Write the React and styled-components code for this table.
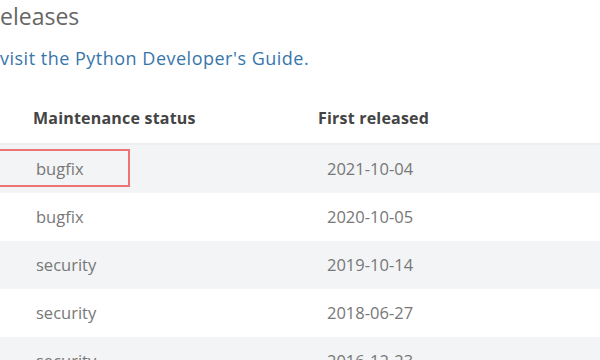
import styled, { createGlobalStyle } from "styled-components";

const releases = [
  { status: "bugfix", date: "2021-10-04", marked: true },
  { status: "bugfix", date: "2020-10-05" },
  { status: "security", date: "2019-10-14" },
  { status: "security", date: "2018-06-27" },
  { status: "security", date: "2016-12-23" },
];

const GlobalStyle = createGlobalStyle`
  html, body {
    margin: 0;
    background: #fff;
    overflow: hidden;
  }
  body {
    font-family: "Open Sans", "Liberation Sans", sans-serif;
  }
`;

const Page = styled.main`
  width: 600px;
  height: 360px;
  overflow: hidden;
`;

const Title = styled.h2`
  margin: 0;
  padding-top: 0;
  font-size: 23px;
  line-height: 32px;
  font-weight: 400;
  color: #666;
`;

const Intro = styled.p`
  margin: 13px 0 0;
  font-size: 18px;
  letter-spacing: 0.5px;
  line-height: 26px;

  a {
    color: #3776ab;
    text-decoration: none;
  }
`;

const Table = styled.div`
  margin: 22px 0 0 -6px;
  width: 620px;
`;

const Row = styled.div`
  display: grid;
  grid-template-columns: 291px 1fr;
  align-items: center;
  height: ${(p) => (p.$head ? "52px" : "48px")};
  background: ${(p) => (p.$striped ? "#f2f4f5" : "#fff")};
  border-bottom: ${(p) => (p.$head ? "2px solid #eceef0" : "none")};
  box-sizing: border-box;
`;

const HeadCell = styled.div`
  padding-left: ${(p) => p.$pad}px;
  font-size: 16px;
  letter-spacing: 0.2px;
  font-weight: 700;
  color: #444;
`;

const Cell = styled.div`
  position: relative;
  padding-left: ${(p) => p.$pad}px;
  font-size: 16.5px;
  color: #777;
  line-height: 36px;
`;

const Marker = styled.span`
  position: absolute;
  left: 0;
  top: -2px;
  width: 136px;
  height: 38px;
  border: 2px solid #ef7373;
  box-sizing: border-box;
  pointer-events: none;
`;

export default function App() {
  return (
    <>
      <GlobalStyle />
      <Page>
        <Title>eleases</Title>
        <Intro>
          <a href="#guide">visit the Python Developer's Guide.</a>
        </Intro>
        <Table>
          <Row $head>
            <HeadCell $pad={39}>Maintenance status</HeadCell>
            <HeadCell $pad={33}>First released</HeadCell>
          </Row>
          {releases.map((r, i) => (
            <Row key={r.date} $striped={i % 2 === 0}>
              <Cell $pad={42}>
                {r.marked && <Marker />}
                {r.status}
              </Cell>
              <Cell $pad={42}>{r.date}</Cell>
            </Row>
          ))}
        </Table>
      </Page>
    </>
  );
}
